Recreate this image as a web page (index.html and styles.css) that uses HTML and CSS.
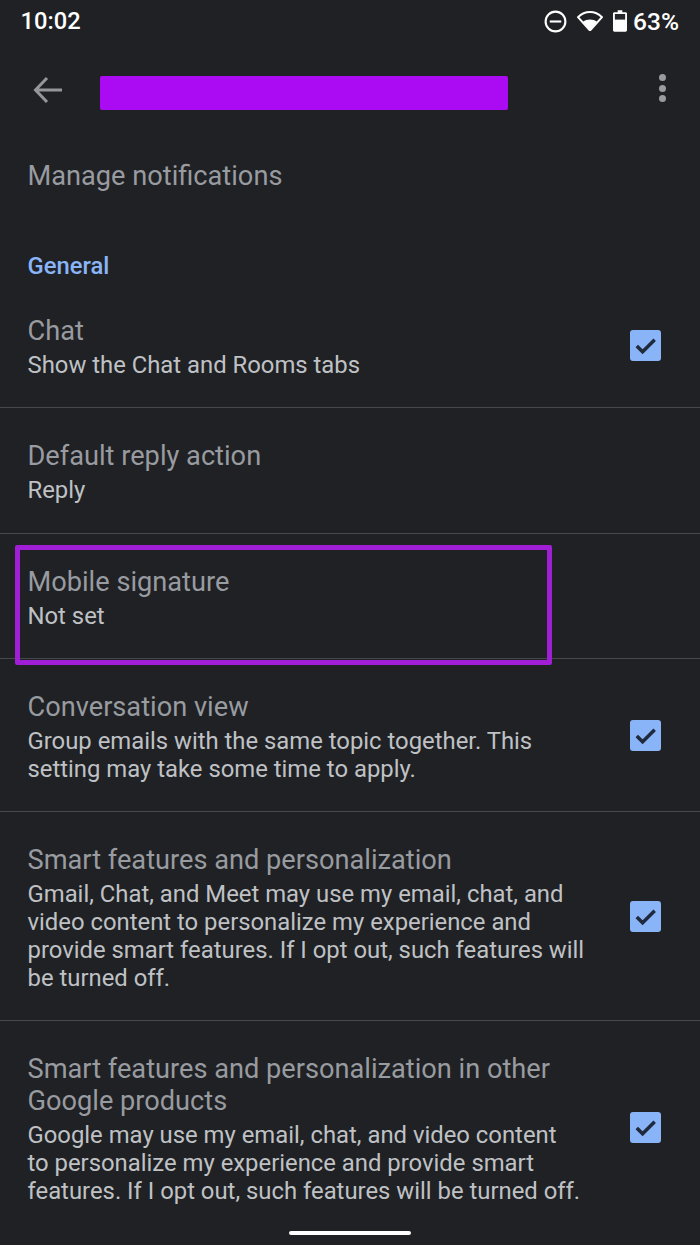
FILE: index.html
```html
<!DOCTYPE html>
<html lang="en">
<head>
<meta charset="utf-8">
<title>Settings</title>
<link rel="stylesheet" href="styles.css">
</head>
<body>
<div class="screen">
  <div class="status">
    <span class="time">10:02</span>
    <div class="status-right">
      <svg class="i-dnd" viewBox="0 0 24 24"><circle cx="12" cy="12" r="9.5" fill="none" stroke="#fff" stroke-width="2"/><rect x="6.5" y="11" width="11" height="2" fill="#fff"/></svg>
      <svg class="i-wifi" viewBox="0 0 26 20"><path d="M13 19.5 1 6.2C4.2 3 8.4 1 13 1s8.800 2 12 5.200Z" fill="none" stroke="#fff" stroke-width="2" stroke-linejoin="round"/><path d="M13 19 6 10.800C8 9.300 10.400 8.500 13 8.500s5 .8 7 2.300Z" fill="#fff"/></svg>
      <svg class="i-batt" viewBox="0 0 15 23"><path d="M5 0h5v2h3.500c.8 0 1.500.7 1.500 1.500v18c0 .8-.7 1.500-1.500 1.500h-12C.7 23 0 22.300 0 21.500v-18C0 2.700.7 2 1.500 2H5Z" fill="#fff"/><rect x="2" y="4" width="11" height="6" fill="#25272b"/></svg>
      <span class="pct">63%</span>
    </div>
  </div>
  <div class="appbar">
    <svg class="i-back" viewBox="0 0 30 28"><path d="M29 14H3M14 2 2.500 14 14 26" fill="none" stroke="#94969a" stroke-width="3"/></svg>
    <div class="redact"></div>
    <div class="more"><i></i><i></i><i></i></div>
  </div>
  <div class="manage">Manage notifications</div>
  <div class="section">General</div>

  <div class="row row-first">
    <div class="text">
      <div class="title">Chat</div>
      <div class="sub">Show the Chat and Rooms tabs</div>
    </div>
    <div class="check"><svg viewBox="0 0 32 32"><path d="M7 16.500 13 22.500 25.500 10" fill="none" stroke="#1f2a3c" stroke-width="3.600"/></svg></div>
  </div>
  <div class="row">
    <div class="text">
      <div class="title">Default reply action</div>
      <div class="sub">Reply</div>
    </div>
  </div>
  <div class="row row-marked">
    <div class="text">
      <div class="title">Mobile signature</div>
      <div class="sub">Not set</div>
    </div>
    <div class="mark"></div>
  </div>
  <div class="row">
    <div class="text">
      <div class="title">Conversation view</div>
      <div class="sub">Group emails with the same topic together. This<br>setting may take some time to apply.</div>
    </div>
    <div class="check"><svg viewBox="0 0 32 32"><path d="M7 16.500 13 22.500 25.500 10" fill="none" stroke="#1f2a3c" stroke-width="3.600"/></svg></div>
  </div>
  <div class="row">
    <div class="text">
      <div class="title">Smart features and personalization</div>
      <div class="sub">Gmail, Chat, and Meet may use my email, chat, and<br>video content to personalize my experience and<br>provide smart features. If I opt out, such features will<br>be turned off.</div>
    </div>
    <div class="check"><svg viewBox="0 0 32 32"><path d="M7 16.500 13 22.500 25.500 10" fill="none" stroke="#1f2a3c" stroke-width="3.600"/></svg></div>
  </div>
  <div class="row row-last">
    <div class="text">
      <div class="title">Smart features and personalization in other<br>Google products</div>
      <div class="sub">Google may use my email, chat, and video content<br>to personalize my experience and provide smart<br>features. If I opt out, such features will be turned off.</div>
    </div>
    <div class="check"><svg viewBox="0 0 32 32"><path d="M7 16.500 13 22.500 25.500 10" fill="none" stroke="#1f2a3c" stroke-width="3.600"/></svg></div>
  </div>
  <div class="navpill"></div>
</div>
</body>
</html>
```
FILE: styles.css
```css
* { box-sizing: border-box; }
html, body { margin: 0; padding: 0; }
body { background: #202124; font-family: Roboto, "Liberation Sans", sans-serif; }
.screen { position: relative; width: 700px; height: 1245px; overflow: hidden; background: #202124; }
.status { height: 42px; display: flex; align-items: center; justify-content: space-between; padding: 0 21px 0 20.500px; color: #fff; }
.time { font-size: 23.700px; font-weight: 500; }
.status-right { display: flex; align-items: center; }
.pct { font-size: 24.500px; font-weight: 500; margin-left: 6px; }
.i-dnd { width: 25px; height: 25px; margin-right: 9px; margin-left: -2px; }
.i-wifi { width: 26px; height: 20px; margin-right: 10px; }
.i-batt { width: 14px; height: 22px; }
.appbar { height: 95px; display: flex; align-items: center; padding: 0 0 0 33px; }
.i-back { width: 30px; height: 28px; }
.redact { width: 408px; height: 34px; margin-left: 37px; margin-top: 7px; background: #ab0bf3; border-radius: 2px; }
.more { margin-left: 151px; margin-top: -3px; display: flex; flex-direction: column; gap: 3.500px; }
.more i { display: block; width: 7px; height: 7px; border-radius: 50%; background: #9a9b9e; }
.manage { padding-left: 27.500px; font-size: 27.200px; line-height: 32px; color: #989ba0; height: 32px; margin-top: 23px; }
.section { padding-left: 27.500px; margin-top: 58px; font-size: 23.800px; font-weight: 500; line-height: 32px; color: #8ab4f8; }
.row { position: relative; display: flex; align-items: center; justify-content: space-between; padding: 32px 39px 28.250px 27.500px; border-bottom: 1.500px solid #46484c; }
.row-first { padding-top: 32.500px; padding-bottom: 28.750px; }
.row-last { border-bottom: 0; }
.title { font-size: 27.200px; line-height: 32px; color: #989ba0; }
.sub { margin-top: 4px; font-size: 23.850px; line-height: 28px; color: #bfc1c5; white-space: nowrap; }
.check { flex: none; width: 31px; height: 31px; margin-top: -3px; border-radius: 3px; background: #8ab4f8; }
.check svg { display: block; width: 31px; height: 31px; }
.mark { position: absolute; left: 15px; top: 11px; width: 537px; height: 120px; border: 5px solid #a01fd6; border-radius: 2px; }
.navpill { position: absolute; left: 289px; top: 1231px; width: 122px; height: 4px; border-radius: 2px; background: #fff; }
```
